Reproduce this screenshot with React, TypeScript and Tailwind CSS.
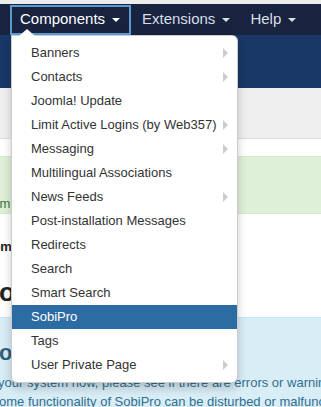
import React from "react";

const items: { label: string; sub?: boolean; active?: boolean }[] = [
  { label: "Banners", sub: true },
  { label: "Contacts", sub: true },
  { label: "Joomla! Update" },
  { label: "Limit Active Logins (by Web357)", sub: true },
  { label: "Messaging", sub: true },
  { label: "Multilingual Associations" },
  { label: "News Feeds", sub: true },
  { label: "Post-installation Messages" },
  { label: "Redirects" },
  { label: "Search" },
  { label: "Smart Search" },
  { label: "SobiPro", active: true },
  { label: "Tags" },
  { label: "User Private Page", sub: true },
];

function Caret() {
  return (
    <span className="inline-block ml-[7px] w-0 h-0 border-l-[4px] border-r-[4px] border-t-[4px] border-l-transparent border-r-transparent border-t-[#d9dde5] align-middle" />
  );
}

export default function App() {
  return (
    <div
      className="relative w-[321px] h-[407px] overflow-hidden bg-white"
      style={{ fontFamily: '"Liberation Sans", Arial, sans-serif' }}
    >
      <div className="h-[4px] bg-[#ececec]" />
      <div className="h-[31px] bg-[#17233f] flex items-center text-[15px] text-[#d9dde5]">
        <div className="ml-[10px] h-[30px] w-[121px] border-2 border-[#5c9ad3] flex items-center pl-[8px] text-white">
          Components
          <span className="inline-block ml-[7px] w-0 h-0 border-l-[4px] border-r-[4px] border-t-[4px] border-l-transparent border-r-transparent border-t-white" />
        </div>
        <div className="ml-[11px] flex items-center">
          Extensions
          <Caret />
        </div>
        <div className="ml-[20px] flex items-center">
          Help
          <Caret />
        </div>
      </div>
      <div className="h-[53px] bg-[#1a3867]" />
      <div className="h-[51px] bg-[#efefef] border-b border-[#dcdcdc]" />
      <div className="h-[17px]" />
      <div className="h-[58px] bg-[#dff0d8] border-y border-[#d6e9c6] text-[13px] text-[#3c763d] flex items-end pb-[0px] overflow-hidden whitespace-nowrap">
        <span className="ml-[-17px]">Comp</span>
      </div>
      <div className="h-[103px] overflow-hidden whitespace-nowrap">
        <div className="mt-[23px] text-[13px] font-bold text-[#222] ml-[-17px]">Comp</div>
        <div className="mt-[20px] text-[26px] font-bold text-[#222] leading-[30px] ml-[-1px]">oi</div>
      </div>
      <div className="h-[120px] bg-[#d9edf7] border-t border-[#bce8f1] overflow-hidden whitespace-nowrap text-[#31708f]">
        <div className="mt-[22px] text-[22px] font-bold leading-[26px] ml-[-1px] text-[#2d5f7e]">ol</div>
        <div className="mt-[7px] text-[13px] leading-[19px] ml-[-2px]">
          your system now, please see if there are errors or warnings
        </div>
        <div className="text-[13px] leading-[19px] ml-[-1px]">
          ome functionality of SobiPro can be disturbed or malfunction
        </div>
      </div>

      {/* dropdown */}
      <div className="absolute left-[11px] top-[35px] w-[227px] bg-white border border-[rgba(0,0,0,0.2)] rounded-b-[6px] rounded-tr-[6px] shadow-[0_5px_10px_rgba(0,0,0,0.2)] py-[5px] text-[13px] text-[#333]">
        <div className="absolute left-[7px] top-[-7px] w-0 h-0 border-l-[8px] border-r-[8px] border-b-[7px] border-l-transparent border-r-transparent border-b-white" />
        {items.map((it) => (
          <div
            key={it.label}
            className={
              "relative h-[24px] flex items-center pl-[19px] whitespace-nowrap " +
              (it.active ? "bg-[#2d6ca2] text-white" : "")
            }
          >
            {it.label}
            {it.sub && (
              <span className="absolute left-[211px] top-[7px] w-0 h-0 border-t-[5px] border-b-[5px] border-l-[5px] border-t-transparent border-b-transparent border-l-[#cccccc]" />
            )}
          </div>
        ))}
      </div>
    </div>
  );
}
